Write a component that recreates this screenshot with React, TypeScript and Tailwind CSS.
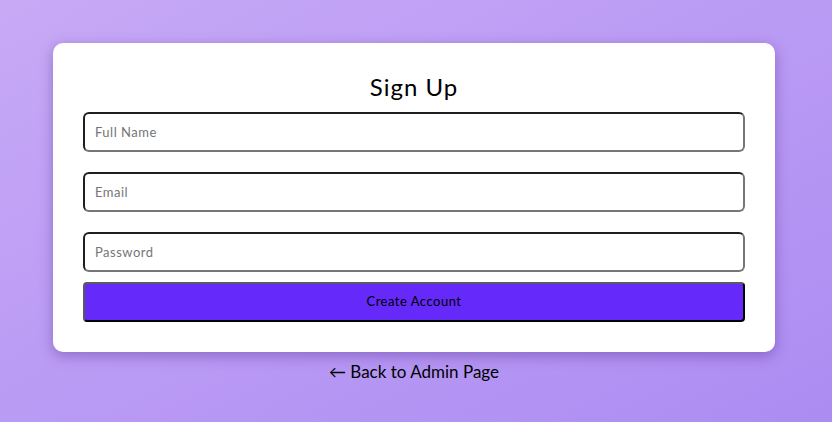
export default function App() {
  return (
    <div
      className="flex min-h-[422px] w-full flex-col items-center bg-gradient-to-br from-[#c7a9f6] to-[#ad8cf2] pr-[4px] pt-[43px]"
      style={{ fontFamily: "Lato, 'Noto Sans', sans-serif" }}
    >
      <form className="flex w-[722px] flex-col rounded-[10px] bg-white px-[30px] pb-[30px] pt-[28px] shadow-[0_4px_14px_rgba(60,20,120,0.35)]">
        <h1 className="mb-[9px] text-center text-[24px] leading-[32px] tracking-[1px] text-black">Sign Up</h1>
        <div className="flex flex-col gap-[20px]">
          <Field placeholder="Full Name" />
          <Field placeholder="Email" />
          <Field placeholder="Password" />
        </div>
        <button
          type="button"
          className="mt-[10px] h-[40px] rounded-[4px] border-2 border-b-black border-l-[#5a5a5a] border-r-black border-t-[#5a5a5a] bg-[#6529f9] text-[13px] tracking-[0.5px] text-black"
        >
          Create Account
        </button>
      </form>
      <a href="#" className="mt-[8px] text-[17px] leading-[24px] text-black">
        ← Back to Admin Page
      </a>
    </div>
  );
}

function Field({ placeholder }: { placeholder: string }) {
  return (
    <input
      placeholder={placeholder}
      className="h-[40px] w-full rounded-[6px] border-2 border-b-[#767676] border-l-[#1f1f1f] border-r-[#767676] border-t-[#1f1f1f] bg-white px-[10px] text-[13px] tracking-[0.5px] text-black outline-none placeholder:text-[#757575]"
    />
  );
}
